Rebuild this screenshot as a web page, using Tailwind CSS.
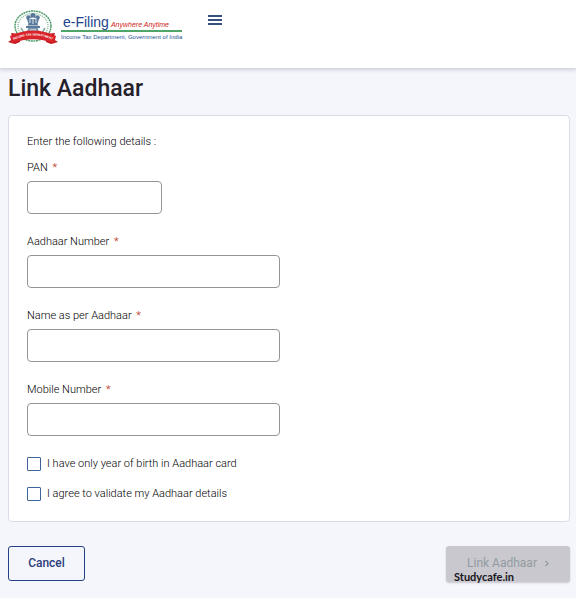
<!DOCTYPE html>
<html lang="en">
    <head>
        <meta charset="UTF-8">
        <meta name="viewport" content="width=device-width, initial-scale=1.0">
        <title>Link Aadhaar</title>
        <script src="https://cdn.jsdelivr.net/npm/@tailwindcss/browser@4"></script>
    </head>
    <body class="bg-[#f5f6fb] min-h-screen font-['Roboto',sans-serif] text-[#25202a]">

        <header class="flex items-start h-[68px] pl-2 bg-white shadow-[0_1px_4px_1px_#cdcfda]">
            <a href="#" class="flex items-start pt-2">
                <!-- emblem -->
                <svg class="w-[50px] h-9 mt-[2px]" viewBox="0 0 50 36" aria-hidden="true">
                    <ellipse cx="25" cy="16" rx="18" ry="15" fill="#fff" stroke="#4f9b6b" stroke-width="1.5" stroke-dasharray="2 .6"/>
                    <ellipse cx="25" cy="16" rx="15" ry="12.5" fill="none" stroke="#8cc0a0" stroke-width="1.5" stroke-dasharray="1 1"/>
                    <g fill="#58799a">
                        <circle cx="25" cy="5.500" r="2.600"/>
                        <circle cx="20.500" cy="7.500" r="2.300"/>
                        <circle cx="29.500" cy="7.500" r="2.300"/>
                        <path d="M19 9h12l-1.500 5 1 1.500h-11l1-1.500z"/>
                        <path d="M18 16h14v2H18z"/>
                        <path d="M20 18h10l1 5H19z" fill="#7f9bb2"/>
                    </g>
                    <path d="M22 8v5M25 7v7M28 8v5M22 20h6" stroke="#e4edf3" stroke-width="1" fill="none"/>
                    <path d="M13 18l3 5M37 18l-3 5" stroke="#87a9a0" stroke-width="1.5"/>
                    <path d="M0 32l5-3-2-6 8 1 1 8-5 2z" fill="#b9151b"/>
                    <path d="M50 32l-5-3 2-6-8 1-1 8 5 2z" fill="#b9151b"/>
                    <path d="M2 26Q25 15 48 26L46 33.500Q25 25 4 33.500z" fill="#d9232a"/>
                    <path id="ribbon" d="M4 30.500Q25 20.500 46 30.500" fill="none"/>
                    <text font-family="Liberation Sans, sans-serif" font-size="3" font-weight="700" fill="#fff" text-anchor="middle">
                        <textPath href="#ribbon" startOffset="50%">INCOME TAX DEPARTMENT</textPath>
                    </text>
                </svg>
                <span class="flex flex-col ml-[3px] pt-[6px] font-['Liberation_Sans',sans-serif]">
                    <span class="flex items-baseline gap-[2px] pl-[2px] border-b-2 border-[#4fa568]">
                        <span class="text-sm leading-4 text-[#24448c]">e-Filing</span>
                        <span class="text-[7px] leading-none italic text-[#cf2417]">Anywhere Anytime</span>
                    </span>
                    <span class="text-[6px] leading-[11px] font-medium text-[#1d5296] whitespace-nowrap">Income Tax Department, Government of India</span>
                </span>
            </a>
            <button type="button" aria-label="Menu" class="ml-[26px] mt-[14px]">
                <svg class="w-[14px] h-3" viewBox="0 0 14 12" stroke="#35517f" stroke-width="2" aria-hidden="true">
                    <path d="M0 2h14M0 6h14M0 10h14"/>
                </svg>
            </button>
        </header>

        <main class="pl-2 pr-[6px] pt-[5px]">
            <h1 class="text-[23px] leading-8 font-medium">Link Aadhaar</h1>

            <form>
                <div class="mt-[10px] px-[18px] pt-4 pb-[17px] bg-white border border-[#d9dbe6] rounded-sm text-[11px] leading-5 font-light text-black">
                    <p class="mb-[6px]">Enter the following details :</p>

                    <div class="flex flex-col gap-[18px]">
                        <div class="flex flex-col gap-[3px]">
                            <label for="pan">PAN <span class="ml-[2px] text-[#b8290f]">*</span></label>
                            <input id="pan" type="text" required class="w-[135px] h-[33px] px-2 border border-[#949599] rounded">
                        </div>
                        <div class="flex flex-col gap-[3px]">
                            <label for="aadhaar">Aadhaar Number <span class="ml-[2px] text-[#b8290f]">*</span></label>
                            <input id="aadhaar" type="text" required class="w-[253px] h-[33px] px-2 border border-[#949599] rounded">
                        </div>
                        <div class="flex flex-col gap-[3px]">
                            <label for="name">Name as per Aadhaar <span class="ml-[2px] text-[#b8290f]">*</span></label>
                            <input id="name" type="text" required class="w-[253px] h-[33px] px-2 border border-[#949599] rounded">
                        </div>
                        <div class="flex flex-col gap-[3px]">
                            <label for="mobile">Mobile Number <span class="ml-[2px] text-[#b8290f]">*</span></label>
                            <input id="mobile" type="tel" required class="w-[253px] h-[33px] px-2 border border-[#949599] rounded">
                        </div>
                    </div>

                    <div class="flex flex-col gap-[10px] mt-[18px]">
                        <label class="flex items-center gap-[6px]">
                            <input type="checkbox" class="appearance-none size-[14px] border border-[#3f649c] rounded-[1px] checked:bg-[#3f649c]">
                            I have only year of birth in Aadhaar card
                        </label>
                        <label class="flex items-center gap-[6px]">
                            <input type="checkbox" class="appearance-none size-[14px] border border-[#3f649c] rounded-[1px] checked:bg-[#3f649c]">
                            I agree to validate my Aadhaar details
                        </label>
                    </div>
                </div>

                <div class="flex items-start justify-between mt-6">
                    <button type="button" class="w-[77px] h-[35px] pb-[2px] border border-[#263f85] rounded-[3px] text-xs font-medium text-[#2b3c7c]">Cancel</button>
                    <div class="relative">
                        <button type="submit" disabled class="flex items-center justify-center gap-2 w-[124px] h-[36px] pb-[2px] rounded-[3px] bg-[#c9c8ce] shadow-[0_1px_2px_#c9c8ce] text-xs text-[#929ba1]">
                            Link Aadhaar
                            <svg class="w-1 h-[7px]" viewBox="0 0 4 7" fill="none" stroke="#929ba1" stroke-width="1.200" aria-hidden="true">
                                <path d="M.5 1l2.500 2.500-2.500 2.500"/>
                            </svg>
                        </button>
                        <span class="absolute left-2 top-6 font-['Lato',sans-serif] text-[11px] leading-[14px] font-bold text-[#17151c]">Studycafe.in</span>
                    </div>
                </div>
            </form>
        </main>

    </body>
</html>
